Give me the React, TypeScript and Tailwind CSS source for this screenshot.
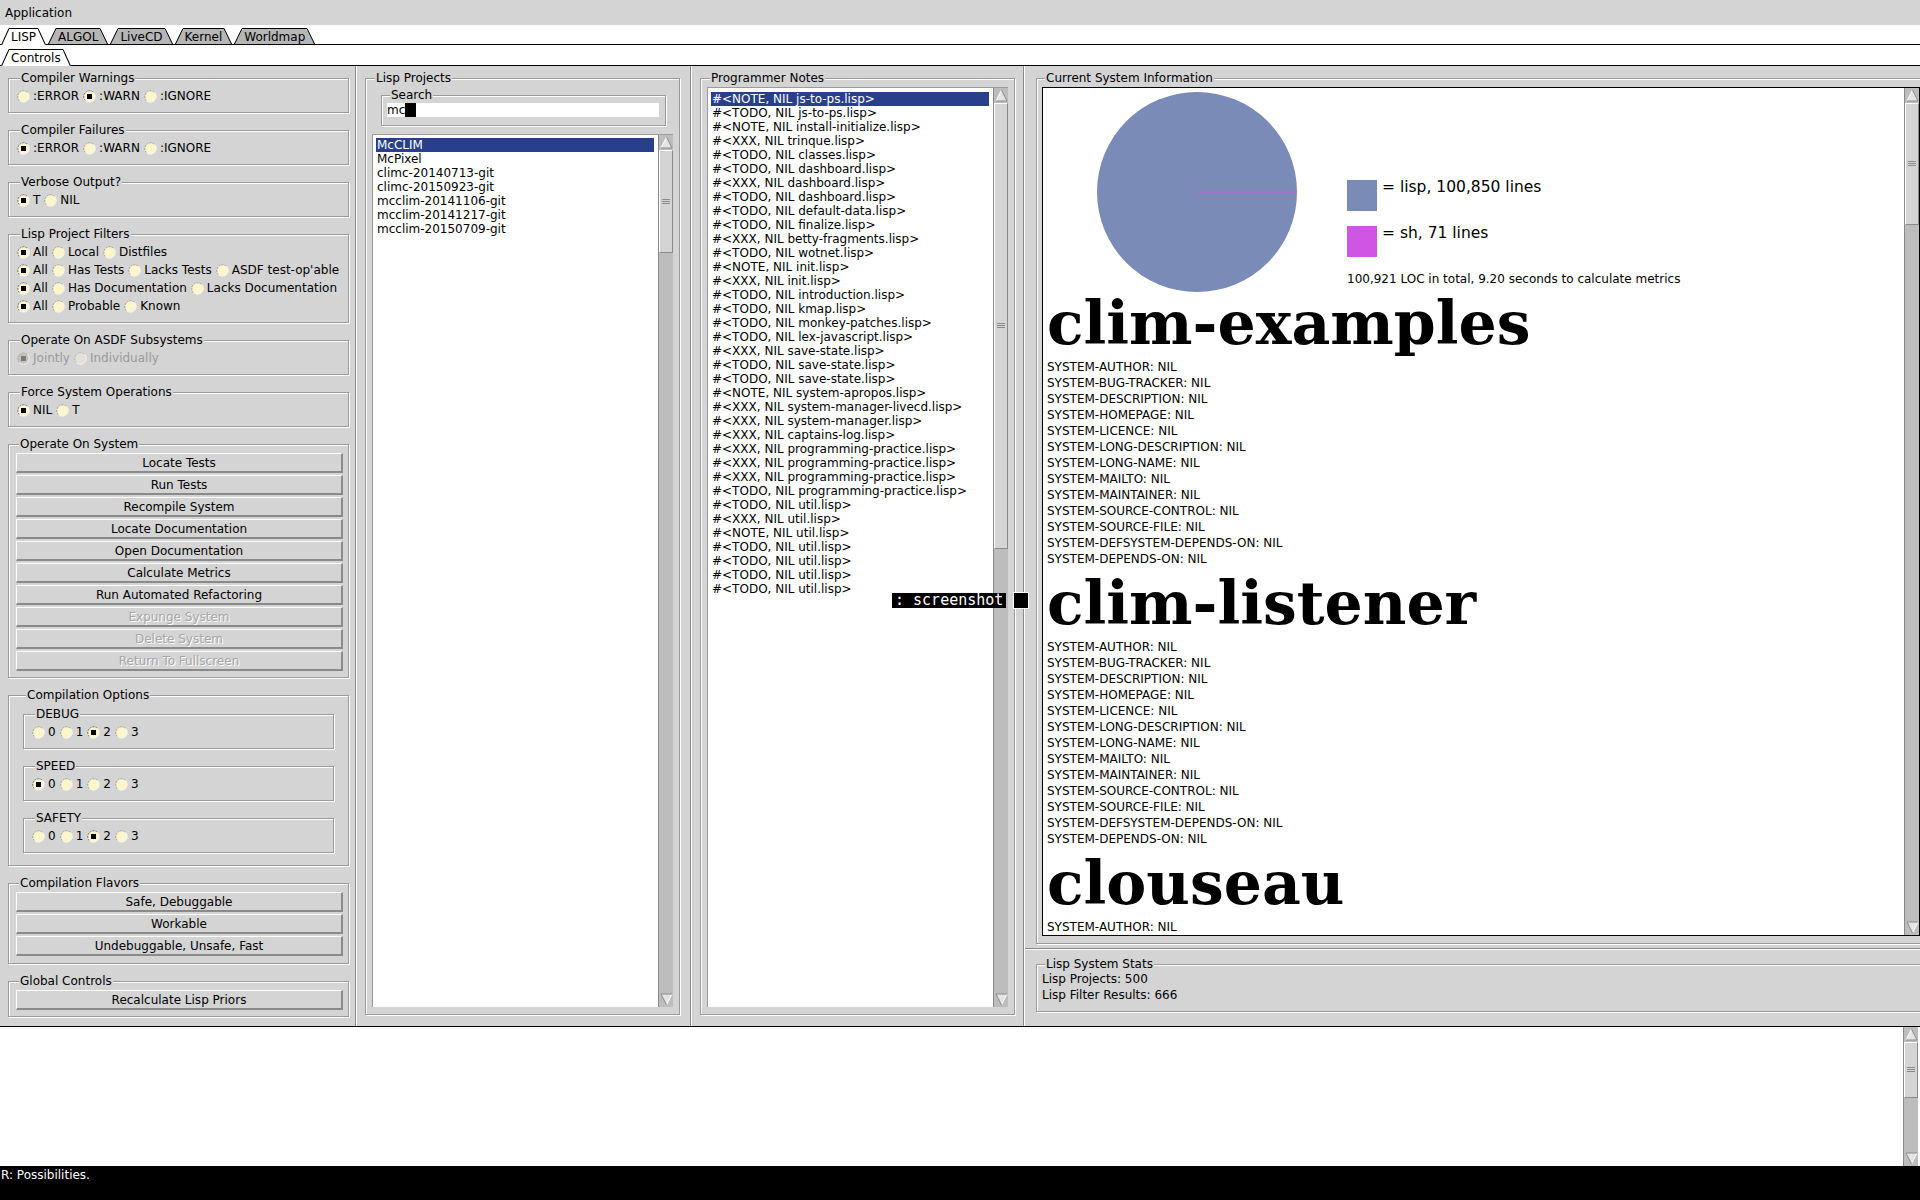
import React from 'react';

// CLIM style "Lisp system manager" frame

const notes: string[] = [
    '#<NOTE, NIL js-to-ps.lisp>',
    '#<TODO, NIL js-to-ps.lisp>',
    '#<NOTE, NIL install-initialize.lisp>',
    '#<XXX, NIL trinque.lisp>',
    '#<TODO, NIL classes.lisp>',
    '#<TODO, NIL dashboard.lisp>',
    '#<XXX, NIL dashboard.lisp>',
    '#<TODO, NIL dashboard.lisp>',
    '#<TODO, NIL default-data.lisp>',
    '#<TODO, NIL finalize.lisp>',
    '#<XXX, NIL betty-fragments.lisp>',
    '#<TODO, NIL wotnet.lisp>',
    '#<NOTE, NIL init.lisp>',
    '#<XXX, NIL init.lisp>',
    '#<TODO, NIL introduction.lisp>',
    '#<TODO, NIL kmap.lisp>',
    '#<TODO, NIL monkey-patches.lisp>',
    '#<TODO, NIL lex-javascript.lisp>',
    '#<XXX, NIL save-state.lisp>',
    '#<TODO, NIL save-state.lisp>',
    '#<TODO, NIL save-state.lisp>',
    '#<NOTE, NIL system-apropos.lisp>',
    '#<XXX, NIL system-manager-livecd.lisp>',
    '#<XXX, NIL system-manager.lisp>',
    '#<XXX, NIL captains-log.lisp>',
    '#<XXX, NIL programming-practice.lisp>',
    '#<XXX, NIL programming-practice.lisp>',
    '#<XXX, NIL programming-practice.lisp>',
    '#<TODO, NIL programming-practice.lisp>',
    '#<TODO, NIL util.lisp>',
    '#<XXX, NIL util.lisp>',
    '#<NOTE, NIL util.lisp>',
    '#<TODO, NIL util.lisp>',
    '#<TODO, NIL util.lisp>',
    '#<TODO, NIL util.lisp>',
    '#<TODO, NIL util.lisp>',
];

const projects = [
    'McCLIM',
    'McPixel',
    'climc-20140713-git',
    'climc-20150923-git',
    'mcclim-20141106-git',
    'mcclim-20141217-git',
    'mcclim-20150709-git',
];

const systemFields = [
    'SYSTEM-AUTHOR',
    'SYSTEM-BUG-TRACKER',
    'SYSTEM-DESCRIPTION',
    'SYSTEM-HOMEPAGE',
    'SYSTEM-LICENCE',
    'SYSTEM-LONG-DESCRIPTION',
    'SYSTEM-LONG-NAME',
    'SYSTEM-MAILTO',
    'SYSTEM-MAINTAINER',
    'SYSTEM-SOURCE-CONTROL',
    'SYSTEM-SOURCE-FILE',
    'SYSTEM-DEFSYSTEM-DEPENDS-ON',
    'SYSTEM-DEPENDS-ON',
];

function Radio({ on, disabled = false }: { on: boolean; disabled?: boolean }) {
    const fill = disabled ? (on ? '#c4c1b6' : '#e4e1d6') : '#fdf6cc';
    return (
        <svg width="13" height="13" viewBox="0 0 13 13" className="shrink-0">
            <circle cx="6.5" cy="6.5" r="5.8" fill={fill} />
            <path d="M2.4 10.6 A5.8 5.8 0 0 1 10.6 2.4" fill="none" stroke={disabled ? '#b4b4b4' : on ? '#6e6e6e' : '#a09d90'} strokeWidth="1" strokeDasharray="2 1" />
            <path d="M10.6 2.4 A5.8 5.8 0 0 1 2.4 10.6" fill="none" stroke="#f4f4f4" strokeWidth="1" />
            {on && <rect x="4" y="4" width="5" height="5" fill={disabled ? '#7a7a7a' : '#000'} />}
        </svg>
    );
}

function RadioRow({ items, sel, disabled = false }: { items: string[]; sel: number; disabled?: boolean }) {
    return (
        <div className={`flex h-[18px] items-center gap-[4px] ${disabled ? 'text-[#9a9a9a]' : ''}`}>
            {items.map((t, i) => (
                <span key={i} className="flex items-center gap-[3px]">
                    <Radio on={i === sel} disabled={disabled} />
                    <span>{t}</span>
                </span>
            ))}
        </div>
    );
}

function Group({ title, className = '', children }: { title: string; className?: string; children: React.ReactNode }) {
    return (
        <fieldset className={`min-w-0 border border-[#9a9a9a] shadow-[inset_1px_1px_0_#fff,1px_1px_0_#fff] ${className}`}>
            <legend className="ml-[3px] px-[1px] leading-[14px] bg-[#d4d4d4]">{title}</legend>
            {children}
        </fieldset>
    );
}

function Btn({ label, disabled = false }: { label: string; disabled?: boolean }) {
    return (
        <div className={`h-[20px] flex items-center justify-center border-t border-l border-t-white border-l-white border-b-2 border-r-2 border-b-[#8a8a8a] border-r-[#8a8a8a] ${disabled ? 'text-[#a6a6a6] [text-shadow:1px_1px_0_#fff]' : ''}`}>
            {label}
        </div>
    );
}

function Tab({ label, active = false }: { label: string; active?: boolean }) {
    const fill = active ? '#ffffff' : '#b6b6b6';
    return (
        <div className={`flex items-stretch ${active ? 'h-[17px] -mb-px' : 'h-[16px]'}`}>
            <svg width="8" height="16" viewBox="0 0 8 16" preserveAspectRatio="none" className="h-full w-[8px]">
                <polygon points="0,16 8,0 8,16" fill={fill} />
                <line x1="0.5" y1="16" x2="8" y2="0.5" stroke="#000" strokeWidth="1" />
            </svg>
            <div className={`flex items-center px-[2px] border-t border-black leading-[14px] ${active ? 'bg-white' : 'bg-[#b6b6b6]'}`}>{label}</div>
            <svg width="8" height="16" viewBox="0 0 8 16" preserveAspectRatio="none" className="h-full w-[8px]">
                <polygon points="0,0 8,16 0,16" fill={fill} />
                <line x1="0" y1="0.5" x2="7.5" y2="16" stroke="#000" strokeWidth="1" />
            </svg>
        </div>
    );
}

function Arrow({ down = false }: { down?: boolean }) {
    return (
        <div className="h-[15px] shrink-0 flex items-center justify-center">
            <svg width="13" height="13" viewBox="0 0 13 13" className={down ? 'rotate-180' : ''}>
                <polygon points="6.5,1 12,12 1,12" fill="#e4e4e4" />
                <polyline points="1,12 6.5,1" fill="none" stroke="#fff" />
                <polyline points="6.5,1 12,12 1,12" fill="none" stroke="#8a8a8a" />
            </svg>
        </div>
    );
}

function VScroll({ thumb }: { thumb: string }) {
    return (
        <div className="w-[15px] shrink-0 flex flex-col bg-[#bdbdbd] border-l border-[#8a8a8a]">
            <Arrow />
            <div className={`${thumb} shrink-0 flex items-center justify-center bg-[#d4d4d4] border-t border-l border-t-white border-l-white border-r border-b border-r-[#8a8a8a] border-b-[#8a8a8a]`}>
                <svg width="8" height="6" viewBox="0 0 8 6">
                    <path d="M0 0.5H8M0 2.5H8M0 4.5H8" stroke="#8a8a8a" strokeWidth="1" />
                </svg>
            </div>
            <div className="flex-1" />
            <Arrow down />
        </div>
    );
}

function Divider() {
    return <div className="w-[2px] shrink-0 border-l border-l-[#8a8a8a] border-r border-r-white" />;
}

function SystemSection({ name, fields = systemFields }: { name: string; fields?: string[] }) {
    return (
        <div>
            <div className="h-[72px] leading-[72px] text-[60px] font-bold font-['DejaVu_Serif',serif] whitespace-nowrap">{name}</div>
            {fields.map((f) => (
                <div key={f} className="h-[16px] leading-[16px]">{f}: NIL</div>
            ))}
        </div>
    );
}

export default function App() {
    return (
        <div className="relative w-[1920px] h-[1200px] overflow-hidden flex flex-col bg-[#d4d4d4] text-black text-[12px] leading-[14px] font-['DejaVu_Sans',sans-serif]">
            {/* menu bar */}
            <div className="h-[25px] shrink-0 flex items-center pl-[5px]">Application</div>

            {/* top level tabs */}
            <div className="h-[20px] shrink-0 bg-white border-b border-black flex items-end pl-[1px] gap-[2px]">
                <Tab label="LISP" active />
                <Tab label="ALGOL" />
                <Tab label="LiveCD" />
                <Tab label="Kernel" />
                <Tab label="Worldmap" />
            </div>
            <div className="h-[21px] shrink-0 bg-white border-b border-black flex items-end pl-[1px]">
                <Tab label="Controls" active />
            </div>

            {/* main panes */}
            <div className="h-[960px] shrink-0 flex">
                {/* controls column */}
                <div className="w-[355px] shrink-0 pl-[8px] pr-[6px] pt-[5px] flex flex-col gap-[10px]">
                    <Group title="Compiler Warnings" className="pl-[8px] pr-[5px] pt-[2px] pb-[7px]">
                        <RadioRow items={[':ERROR', ':WARN', ':IGNORE']} sel={1} />
                    </Group>
                    <Group title="Compiler Failures" className="pl-[8px] pr-[5px] pt-[2px] pb-[7px]">
                        <RadioRow items={[':ERROR', ':WARN', ':IGNORE']} sel={0} />
                    </Group>
                    <Group title="Verbose Output?" className="pl-[8px] pr-[5px] pt-[2px] pb-[7px]">
                        <RadioRow items={['T', 'NIL']} sel={0} />
                    </Group>
                    <Group title="Lisp Project Filters" className="pl-[8px] pr-[5px] pt-[2px] pb-[7px]">
                        <RadioRow items={['All', 'Local', 'Distfiles']} sel={0} />
                        <RadioRow items={['All', 'Has Tests', 'Lacks Tests', "ASDF test-op'able"]} sel={0} />
                        <RadioRow items={['All', 'Has Documentation', 'Lacks Documentation']} sel={0} />
                        <RadioRow items={['All', 'Probable', 'Known']} sel={0} />
                    </Group>
                    <Group title="Operate On ASDF Subsystems" className="pl-[8px] pr-[5px] pt-[2px] pb-[7px]">
                        <RadioRow items={['Jointly', 'Individually']} sel={0} disabled />
                    </Group>
                    <Group title="Force System Operations" className="pl-[8px] pr-[5px] pt-[2px] pb-[7px]">
                        <RadioRow items={['NIL', 'T']} sel={0} />
                    </Group>
                    <Group title="Operate On System" className="pl-[7px] pr-[5px] pt-[2px] pb-[6px]">
                        <div className="flex flex-col gap-[2px]">
                            <Btn label="Locate Tests" />
                            <Btn label="Run Tests" />
                            <Btn label="Recompile System" />
                            <Btn label="Locate Documentation" />
                            <Btn label="Open Documentation" />
                            <Btn label="Calculate Metrics" />
                            <Btn label="Run Automated Refactoring" />
                            <Btn label="Expunge System" disabled />
                            <Btn label="Delete System" disabled />
                            <Btn label="Return To Fullscreen" disabled />
                        </div>
                    </Group>
                    <Group title="Compilation Options" className="px-[14px] pt-[5px] pb-[12px]">
                        <div className="flex flex-col gap-[10px]">
                            <Group title="DEBUG" className="pl-[8px] pr-[5px] pt-[2px] pb-[7px]">
                                <RadioRow items={['0', '1', '2', '3']} sel={2} />
                            </Group>
                            <Group title="SPEED" className="pl-[8px] pr-[5px] pt-[2px] pb-[7px]">
                                <RadioRow items={['0', '1', '2', '3']} sel={0} />
                            </Group>
                            <Group title="SAFETY" className="pl-[8px] pr-[5px] pt-[2px] pb-[7px]">
                                <RadioRow items={['0', '1', '2', '3']} sel={2} />
                            </Group>
                        </div>
                    </Group>
                    <Group title="Compilation Flavors" className="pl-[7px] pr-[5px] pt-[2px] pb-[7px]">
                        <div className="flex flex-col gap-[2px]">
                            <Btn label="Safe, Debuggable" />
                            <Btn label="Workable" />
                            <Btn label="Undebuggable, Unsafe, Fast" />
                        </div>
                    </Group>
                    <Group title="Global Controls" className="pl-[7px] pr-[5px] pt-[2px] pb-[6px]">
                        <Btn label="Recalculate Lisp Priors" />
                    </Group>
                </div>
                <Divider />

                {/* lisp projects */}
                <div className="w-[333px] shrink-0 pl-[8px] pr-[10px] pt-[5px] pb-[11px] flex flex-col">
                    <Group title="Lisp Projects" className="flex-1 flex flex-col px-[6px] pb-[7px]">
                        <Group title="Search" className="mt-[3px] ml-[9px] mr-[7px] pl-[5px] pr-[6px] pt-[1px] pb-[8px]">
                            <div className="h-[14px] bg-white flex items-center leading-[14px]">
                                <span>mc</span>
                                <span className="w-[11px] h-[14px] bg-black" />
                            </div>
                        </Group>
                        <div className="mt-[8px] flex-1 flex bg-white border-t border-l border-[#9a9a9a]">
                            <div className="flex-1 min-w-0 pt-[3px] pl-[3px] pr-[4px]">
                                {projects.map((p, i) => (
                                    <div key={p} className={`h-[14px] leading-[14px] pl-[1px] whitespace-nowrap ${i === 0 ? 'bg-[#293f8b] text-white' : ''}`}>{p}</div>
                                ))}
                            </div>
                            <VScroll thumb="h-[103px]" />
                        </div>
                    </Group>
                </div>
                <Divider />

                {/* programmer notes */}
                <div className="w-[331px] shrink-0 pl-[8px] pr-[8px] pt-[5px] pb-[11px] flex flex-col">
                    <Group title="Programmer Notes" className="flex-1 flex flex-col px-[6px] pt-[2px] pb-[7px]">
                        <div className="flex-1 flex bg-white border-t border-l border-[#9a9a9a]">
                            <div className="flex-1 min-w-0 pt-[4px] pl-[3px] pr-[4px]">
                                {notes.map((n, i) => (
                                    <div key={i} className={`h-[14px] leading-[14px] pl-[1px] whitespace-nowrap ${i === 0 ? 'bg-[#293f8b] text-white' : ''}`}>{n}</div>
                                ))}
                            </div>
                            <VScroll thumb="flex-1" />
                        </div>
                    </Group>
                </div>
                <Divider />

                {/* system information */}
                <div className="flex-1 min-w-0 overflow-hidden flex flex-col">
                    <div className="h-[882px] shrink-0 pl-[11px] pt-[5px]">
                        <Group title="Current System Information" className="h-[873px] -mr-[6px] flex flex-col pl-[5px] pr-[5px] pt-[2px] pb-[7px]">
                            <div className="flex-1 min-h-0 flex bg-white border border-black">
                                <div className="flex-1 min-w-0 overflow-hidden pl-[4px]">
                                    <div className="h-[199px] flex items-start">
                                        <svg width="200" height="200" viewBox="0 0 200 200" className="ml-[50px] mt-[4px] shrink-0">
                                            <circle cx="100" cy="100" r="100" fill="#7a8bb8" />
                                            <line x1="100" y1="100" x2="200" y2="100" stroke="#d055e4" strokeWidth="1" />
                                        </svg>
                                        <div className="ml-[50px] mt-[92px] flex flex-col">
                                            <div className="flex items-start gap-[5px]">
                                                <div className="w-[30px] h-[31px] bg-[#7a8bb8]" />
                                                <div className="text-[15.5px] leading-[18px] -mt-[2px]">= lisp, 100,850 lines</div>
                                            </div>
                                            <div className="mt-[15px] flex items-start gap-[5px]">
                                                <div className="w-[30px] h-[31px] bg-[#d055e4]" />
                                                <div className="text-[15.5px] leading-[18px] -mt-[2px]">= sh, 71 lines</div>
                                            </div>
                                            <div className="mt-[15px] leading-[14px] whitespace-nowrap">100,921 LOC in total, 9.20 seconds to calculate metrics</div>
                                        </div>
                                    </div>
                                    <SystemSection name="clim-examples" />
                                    <SystemSection name="clim-listener" />
                                    <SystemSection name="clouseau" fields={['SYSTEM-AUTHOR']} />
                                </div>
                                <VScroll thumb="h-[122px]" />
                            </div>
                        </Group>
                    </div>
                    <div className="h-[2px] shrink-0 border-t border-t-[#8a8a8a] border-b border-b-white" />
                    <div className="flex-1 pl-[11px] pt-[7px]">
                        <Group title="Lisp System Stats" className="h-[55px] -mr-[6px] pl-[5px] pb-[8px]">
                            <div className="h-[16px] leading-[16px]">Lisp Projects: 500</div>
                            <div className="h-[16px] leading-[16px]">Lisp Filter Results: 666</div>
                        </Group>
                    </div>
                </div>
            </div>

            {/* interactor */}
            <div className="h-[140px] shrink-0 bg-white border-t border-black flex justify-end pr-[2px]">
                <VScroll thumb="flex-1" />
            </div>

            {/* pointer documentation */}
            <div className="flex-1 bg-black text-white pl-[1px] pt-[2px]">R: Possibilities.</div>

            {/* typed command echo */}
            <div className="absolute left-[892px] top-[592px] flex items-center">
                <div className="h-[15px] w-[114px] bg-black text-white pl-[3px] text-[15px] leading-[15px] font-['DejaVu_Sans_Mono',monospace] whitespace-nowrap">: screenshot</div>
                <div className="ml-[7px] w-[16px] h-[17px] bg-black border border-white" />
            </div>
        </div>
    );
}
